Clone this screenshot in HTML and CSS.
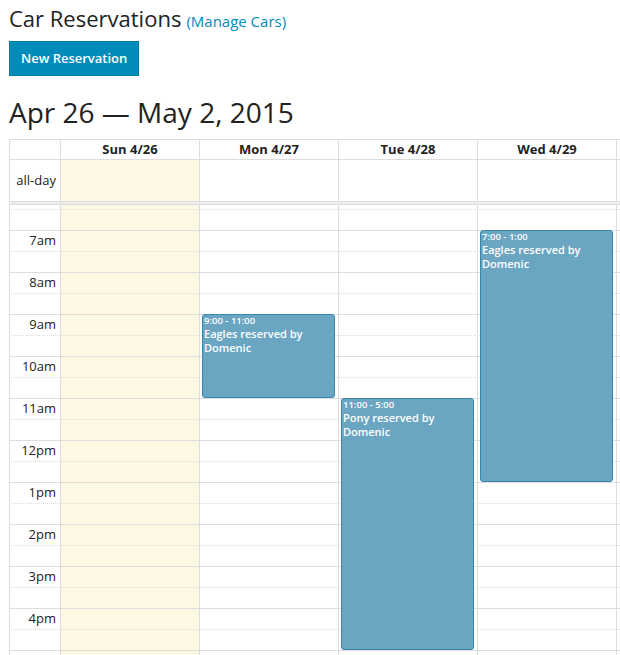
FILE: index.html
```html
<!DOCTYPE html>
<html lang="en">
<head>
<meta charset="utf-8">
<title>Car Reservations</title>
<link rel="stylesheet" href="styles.css">
</head>
<body>
<div class="page">
  <div class="title-row">
    <h1 class="title">Car Reservations</h1>
    <a class="manage" href="#">(Manage Cars)</a>
  </div>
  <a class="btn" href="#">New Reservation</a>
  <h2 class="range">Apr 26 — May 2, 2015</h2>

  <div class="cal">
    <div class="row head">
      <div class="cell axis"></div>
      <div class="cell day">Sun 4/26</div>
      <div class="cell day">Mon 4/27</div>
      <div class="cell day">Tue 4/28</div>
      <div class="cell day">Wed 4/29</div>
      <div class="cell day">Thu 4/30</div>
      <div class="cell day">Fri 5/1</div>
      <div class="cell day">Sat 5/2</div>
    </div>
    <div class="row allday">
      <div class="cell axis">all-day</div>
      <div class="cell day today"></div>
      <div class="cell day"></div>
      <div class="cell day"></div>
      <div class="cell day"></div>
      <div class="cell day"></div>
      <div class="cell day"></div>
      <div class="cell day"></div>
    </div>
    <div class="divider"></div>

    <div class="grid">
      <div class="grid-bg">
        <div class="cell axis"></div>
        <div class="cell day today"></div>
        <div class="cell day"></div>
        <div class="cell day"></div>
        <div class="cell day"></div>
        <div class="cell day"></div>
        <div class="cell day"></div>
        <div class="cell day"></div>
      </div>

      <div class="slats">
        <div class="slat part"></div>
        <div class="slat minor"></div>
        <div class="slat"><div class="slat-label">7am</div></div>
        <div class="slat minor"></div>
        <div class="slat"><div class="slat-label">8am</div></div>
        <div class="slat minor"></div>
        <div class="slat"><div class="slat-label">9am</div></div>
        <div class="slat minor"></div>
        <div class="slat"><div class="slat-label">10am</div></div>
        <div class="slat minor"></div>
        <div class="slat"><div class="slat-label">11am</div></div>
        <div class="slat minor"></div>
        <div class="slat"><div class="slat-label">12pm</div></div>
        <div class="slat minor"></div>
        <div class="slat"><div class="slat-label">1pm</div></div>
        <div class="slat minor"></div>
        <div class="slat"><div class="slat-label">2pm</div></div>
        <div class="slat minor"></div>
        <div class="slat"><div class="slat-label">3pm</div></div>
        <div class="slat minor"></div>
        <div class="slat"><div class="slat-label">4pm</div></div>
        <div class="slat minor"></div>
        <div class="slat"><div class="slat-label">5pm</div></div>
        <div class="slat minor"></div>
        <div class="slat"><div class="slat-label">6pm</div></div>
        <div class="slat minor"></div>
      </div>

      <div class="grid-events">
        <div class="ev-axis"></div>
        <div class="ev-col"></div>
        <div class="ev-col">
          <div class="event" style="top:109px;height:84px">
            <div class="ev-time">9:00 - 11:00</div>
            <div class="ev-title">Eagles reserved by Domenic</div>
          </div>
        </div>
        <div class="ev-col">
          <div class="event" style="top:193px;height:252px">
            <div class="ev-time">11:00 - 5:00</div>
            <div class="ev-title">Pony reserved by Domenic</div>
          </div>
        </div>
        <div class="ev-col">
          <div class="event" style="top:25px;height:252px">
            <div class="ev-time">7:00 - 1:00</div>
            <div class="ev-title">Eagles reserved by Domenic</div>
          </div>
        </div>
        <div class="ev-col"></div>
        <div class="ev-col"></div>
        <div class="ev-col"></div>
      </div>
    </div>
  </div>
</div>
</body>
</html>
```

FILE: styles.css
```css
html, body {
  margin: 0;
  padding: 0;
  overflow: hidden;
}

body {
  font-family: "Open Sans", "Liberation Sans", sans-serif;
  color: #222;
  background: #fff;
}

.page {
  padding-left: 9px;
}

.title-row {
  display: flex;
  align-items: baseline;
  gap: 5px;
  padding-top: 4px;
  height: 29px;
}

.title {
  margin: 0;
  font-size: 22px;
  font-weight: 400;
  line-height: 29px;
}

.manage {
  font-size: 15px;
  color: #008cba;
  text-decoration: none;
}

.btn {
  display: block;
  width: fit-content;
  margin-top: 8px;
  padding: 0 11px;
  background: #008cba;
  border: 1px solid #007ba6;
  color: #fff;
  font-size: 13px;
  font-weight: 600;
  line-height: 33px;
  text-decoration: none;
}

.range {
  margin: 17px 0 0;
  font-size: 28px;
  font-weight: 400;
  line-height: 38px;
}

.cal {
  margin-top: 8px;
  width: 1025px;
  border-top: 1px solid #ddd;
  font-size: 13px;
}

.row {
  display: flex;
}

.cell {
  box-sizing: border-box;
  border-left: 1px solid #ddd;
  flex: none;
}

.axis {
  width: 51px;
  text-align: right;
  padding-right: 4px;
}

.day {
  width: 139px;
}

.today {
  background: #fcf8e3;
}

.head {
  border-bottom: 1px solid #ddd;
}

.head .cell {
  height: 19px;
  line-height: 19px;
  font-weight: 700;
  text-align: center;
}

.allday .cell {
  height: 41px;
  line-height: 41px;
}

.divider {
  height: 2px;
  background: #eee;
  border-top: 1px solid #ddd;
  border-bottom: 1px solid #ddd;
}

.grid {
  position: relative;
}

.grid-bg {
  position: absolute;
  inset: 0;
  display: flex;
}

.grid-bg .cell {
  height: 100%;
}

.slats {
  position: relative;
}

.slat {
  box-sizing: border-box;
  height: 21px;
  border-top: 1px solid #ddd;
}

.slat.minor {
  border-top-style: dotted;
}

.slat.part {
  height: 4px;
  border-top: none;
}

.slat-label {
  box-sizing: border-box;
  width: 51px;
  padding-right: 4px;
  text-align: right;
  line-height: 19px;
}

.grid-events {
  position: absolute;
  inset: 0;
  display: flex;
}

.ev-axis {
  width: 51px;
  flex: none;
}

.ev-col {
  position: relative;
  width: 139px;
  flex: none;
}

.event {
  position: absolute;
  left: 3px;
  right: 3px;
  box-sizing: border-box;
  border: 1px solid #3a87ad;
  border-radius: 3px;
  background: #6aa5c2;
  color: #fff;
  padding: 0 1px;
  overflow: hidden;
  font-weight: 600;
}

.ev-time {
  font-size: 9.5px;
  line-height: 12px;
  white-space: nowrap;
}

.ev-title {
  font-size: 11px;
  line-height: 14px;
}
```
